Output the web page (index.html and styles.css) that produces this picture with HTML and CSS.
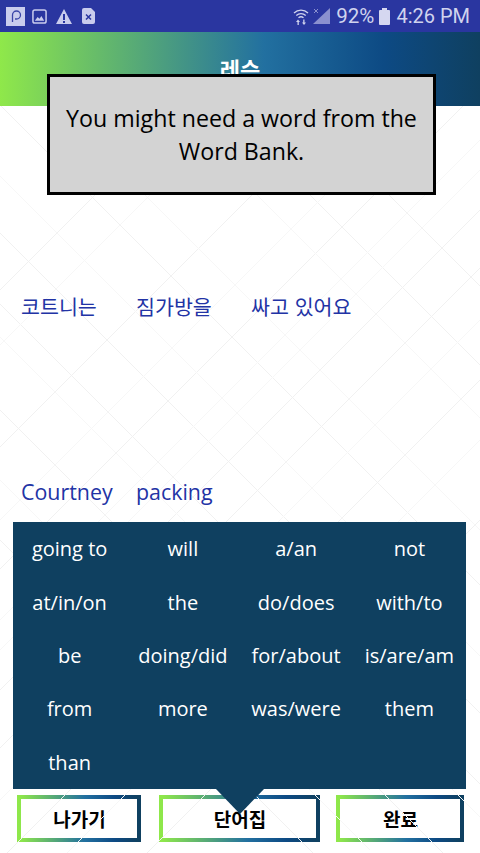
FILE: index.html
```html
<!DOCTYPE html>
<html lang="ko">
<head>
<meta charset="utf-8">
<title>레슨</title>
<link rel="stylesheet" href="styles.css">
</head>
<body>
<div class="screen">
  <svg class="pattern" width="480" height="853" viewBox="0 0 480 853" aria-hidden="true">
    <g stroke="#f1f1f1" stroke-width="1" fill="none">
      <path d="M0 -194L480 286M0 -115L480 365M0 105L480 585M0 233L480 713M0 304L480 784M0 410L480 890M0 540L320 860"/>
      <path d="M0 290L184 106M0 447L341 106M0 569L463 106M0 690L480 210M0 748L480 268M0 860L480 380M0 1000L480 520"/>
    </g>
    <g stroke="#f7f7f7" stroke-width="1" fill="none">
      <path d="M0 -62L480 418M0 50L480 530M0 176L480 656M0 337L480 817M0 480L370 850"/>
      <path d="M0 345L239 106M0 520L414 106M0 620L480 140M0 650L480 170M0 800L480 320M0 920L480 440"/>
    </g>
  </svg>

  <header class="status">
    <div class="status-left">
      <svg viewBox="0 0 19 19" width="19" height="19"><rect width="19" height="19" fill="#c9cced"/><path d="M6.500 15V8a4 4 0 1 1 4 4H9" fill="none" stroke="#3a45a8" stroke-width="1.300"/></svg>
      <svg viewBox="0 0 16 16" width="15" height="15"><rect x="1" y="1" width="14" height="14" rx="2" fill="none" stroke="#c9cced" stroke-width="1.600"/><path d="M3 12.500l3-4 2 2 2-3 3 5z" fill="#c9cced"/></svg>
      <svg class="ic-warn" viewBox="0 0 16 15" width="16" height="15"><path d="M8 0L16 15H0z" fill="#c9cced"/><rect x="7" y="5" width="2" height="6" fill="#2a36a0"/><rect x="7" y="12" width="2" height="2" fill="#2a36a0"/></svg>
      <svg class="ic-file" viewBox="0 0 13 16" width="13" height="16"><path d="M2 0h7l4 4v10a2 2 0 0 1-2 2H2a2 2 0 0 1-2-2V2a2 2 0 0 1 2-2z" fill="#c9cced"/><path d="M4 6.500l5 5M9 6.500l-5 5" stroke="#2a36a0" stroke-width="1.500"/></svg>
    </div>
    <div class="status-right">
      <svg viewBox="0 0 16 17" width="16" height="17"><g fill="none" stroke="#d0d3ee" stroke-width="1.300"><path d="M1 5a10 10 0 0 1 14 0"/><path d="M3.300 7.500a7 7 0 0 1 9.400 0"/><path d="M5.500 9.800a3.800 3.800 0 0 1 5 0"/></g><path d="M4.500 17v-3H3l2-2.500L7 14H5.800v3zM10.200 11.500v3H9l2 2.500 2-2.500h-1.500v-3z" fill="#d0d3ee"/></svg>
      <svg class="signal" viewBox="0 0 17 16" width="17" height="16"><path d="M17 0v16H0z" fill="#8a90cf"/><path d="M1 1l4 4M5 1L1 5" stroke="#8a90cf" stroke-width="1"/></svg>
      <span class="battery-pct">92%</span>
      <svg class="battery" viewBox="0 0 11 17" width="11" height="17"><rect y="2" width="11" height="15" rx="1" fill="#d5d7f0"/><rect x="3" width="5" height="2.500" fill="#d5d7f0"/></svg>
      <span class="clock">4:26 PM</span>
    </div>
  </header>

  <div class="topbar"><h1 class="title">레슨</h1></div>

  <div class="tooltip">You might need a word from the Word Bank.</div>

  <main class="lesson">
    <div class="line line-ko">
      <span class="w1">코트니는</span>
      <span class="w2">짐가방을</span>
      <span>싸고 있어요</span>
    </div>
    <div class="line line-en">
      <span class="w1">Courtney</span>
      <span class="w2">packing</span>
    </div>
  </main>

  <section class="bank">
    <span>going to</span><span>will</span><span>a/an</span><span>not</span>
    <span>at/in/on</span><span>the</span><span>do/does</span><span>with/to</span>
    <span>be</span><span>doing/did</span><span>for/about</span><span>is/are/am</span>
    <span>from</span><span>more</span><span>was/were</span><span>them</span>
    <span>than</span>
  </section>

  <nav class="actions">
    <button class="btn btn-exit">나가기</button>
    <button class="btn btn-bank">단어집</button>
    <button class="btn btn-done">완료</button>
  </nav>
</div>
</body>
</html>
```
FILE: styles.css
```css
* { box-sizing: border-box; }
html, body { margin: 0; padding: 0; }
body {
  width: 480px;
  height: 853px;
  overflow: hidden;
  background: #fff;
  font-family: "Open Sans", "Noto Sans CJK KR", sans-serif;
}
.screen {
  position: relative;
  width: 480px;
  height: 853px;
  display: flex;
  flex-direction: column;
  overflow: hidden;
}
.pattern { position: absolute; left: 0; top: 0; }
.status {
  position: relative;
  height: 32px;
  flex: none;
  background: #2a36a0;
  display: flex;
  justify-content: space-between;
  align-items: center;
  padding: 0 10px 0 6px;
  color: #d0d3ee;
}
.status-left { display: flex; align-items: center; gap: 7px; }
.ic-warn { margin-left: 2px; }
.ic-file { margin-left: 3px; }
.status-right { display: flex; align-items: center; font-family: "Roboto", sans-serif; }
.signal { margin-left: 4px; margin-right: 6px; }
.battery-pct { font-size: 20.500px; }
.battery { margin-left: 5px; }
.clock { font-size: 20px; margin-left: 6px; }
.topbar {
  position: relative;
  height: 74px;
  flex: none;
  background: linear-gradient(90deg, #8fe84a 0%, #2270a0 55%, #0d4a84 80%, #0f4060 100%);
  display: flex;
  justify-content: center;
}
.title {
  margin: 23px 0 0;
  color: #fff;
  font-size: 22px;
  line-height: 26px;
  font-weight: 700;
  font-family: "Noto Sans CJK KR", sans-serif;
}
.tooltip {
  position: absolute;
  left: 47px;
  top: 74px;
  width: 389px;
  height: 121px;
  background: #d3d3d3;
  border: 3px solid #000;
  padding: 0 10px;
  display: flex;
  align-items: center;
  justify-content: center;
  text-align: center;
  font-size: 23.200px;
  line-height: 33px;
  color: #000;
}
.lesson {
  position: relative;
  flex: none;
  height: 416px;
  color: #2233a5;
  font-size: 21.400px;
}
.line { display: flex; position: absolute; left: 21px; line-height: 30px; }
.line-ko { top: 185px; font-family: "Noto Sans CJK KR", sans-serif; font-size: 20.600px; }
.line-en { top: 371px; }
.w1 { width: 115px; }
.w2 { width: 115px; }
.bank {
  position: relative;
  flex: none;
  margin-left: 13px;
  width: 453px;
  height: 267px;
  background: #0f4060;
  display: grid;
  grid-template-columns: repeat(4, 1fr);
  grid-auto-rows: 53.400px;
  align-items: center;
  justify-items: center;
  color: #fff;
  font-size: 20px;
}
.bank::after {
  content: "";
  position: absolute;
  left: 203px;
  top: 267px;
  width: 0;
  height: 0;
  border-left: 24px solid transparent;
  border-right: 24px solid transparent;
  border-top: 25px solid #0f4060;
}
.actions {
  flex: none;
  display: flex;
  margin-top: 6px;
  padding-left: 17px;
  height: 47px;
}
.btn {
  height: 47px;
  background: #fff;
  border: 4px solid;
  border-image: linear-gradient(90deg, #8fe84a 0%, #2270a0 55%, #0d4a84 80%, #0f4060 100%) 1;
  font-family: "Noto Sans CJK KR", sans-serif;
  font-weight: 700;
  font-size: 19px;
  color: #000;
  padding: 0 0 0 1px;
}
.btn-exit { width: 124px; }
.btn-bank { width: 161px; margin-left: 18px; }
.btn-done { width: 128px; margin-left: 16px; }
```
